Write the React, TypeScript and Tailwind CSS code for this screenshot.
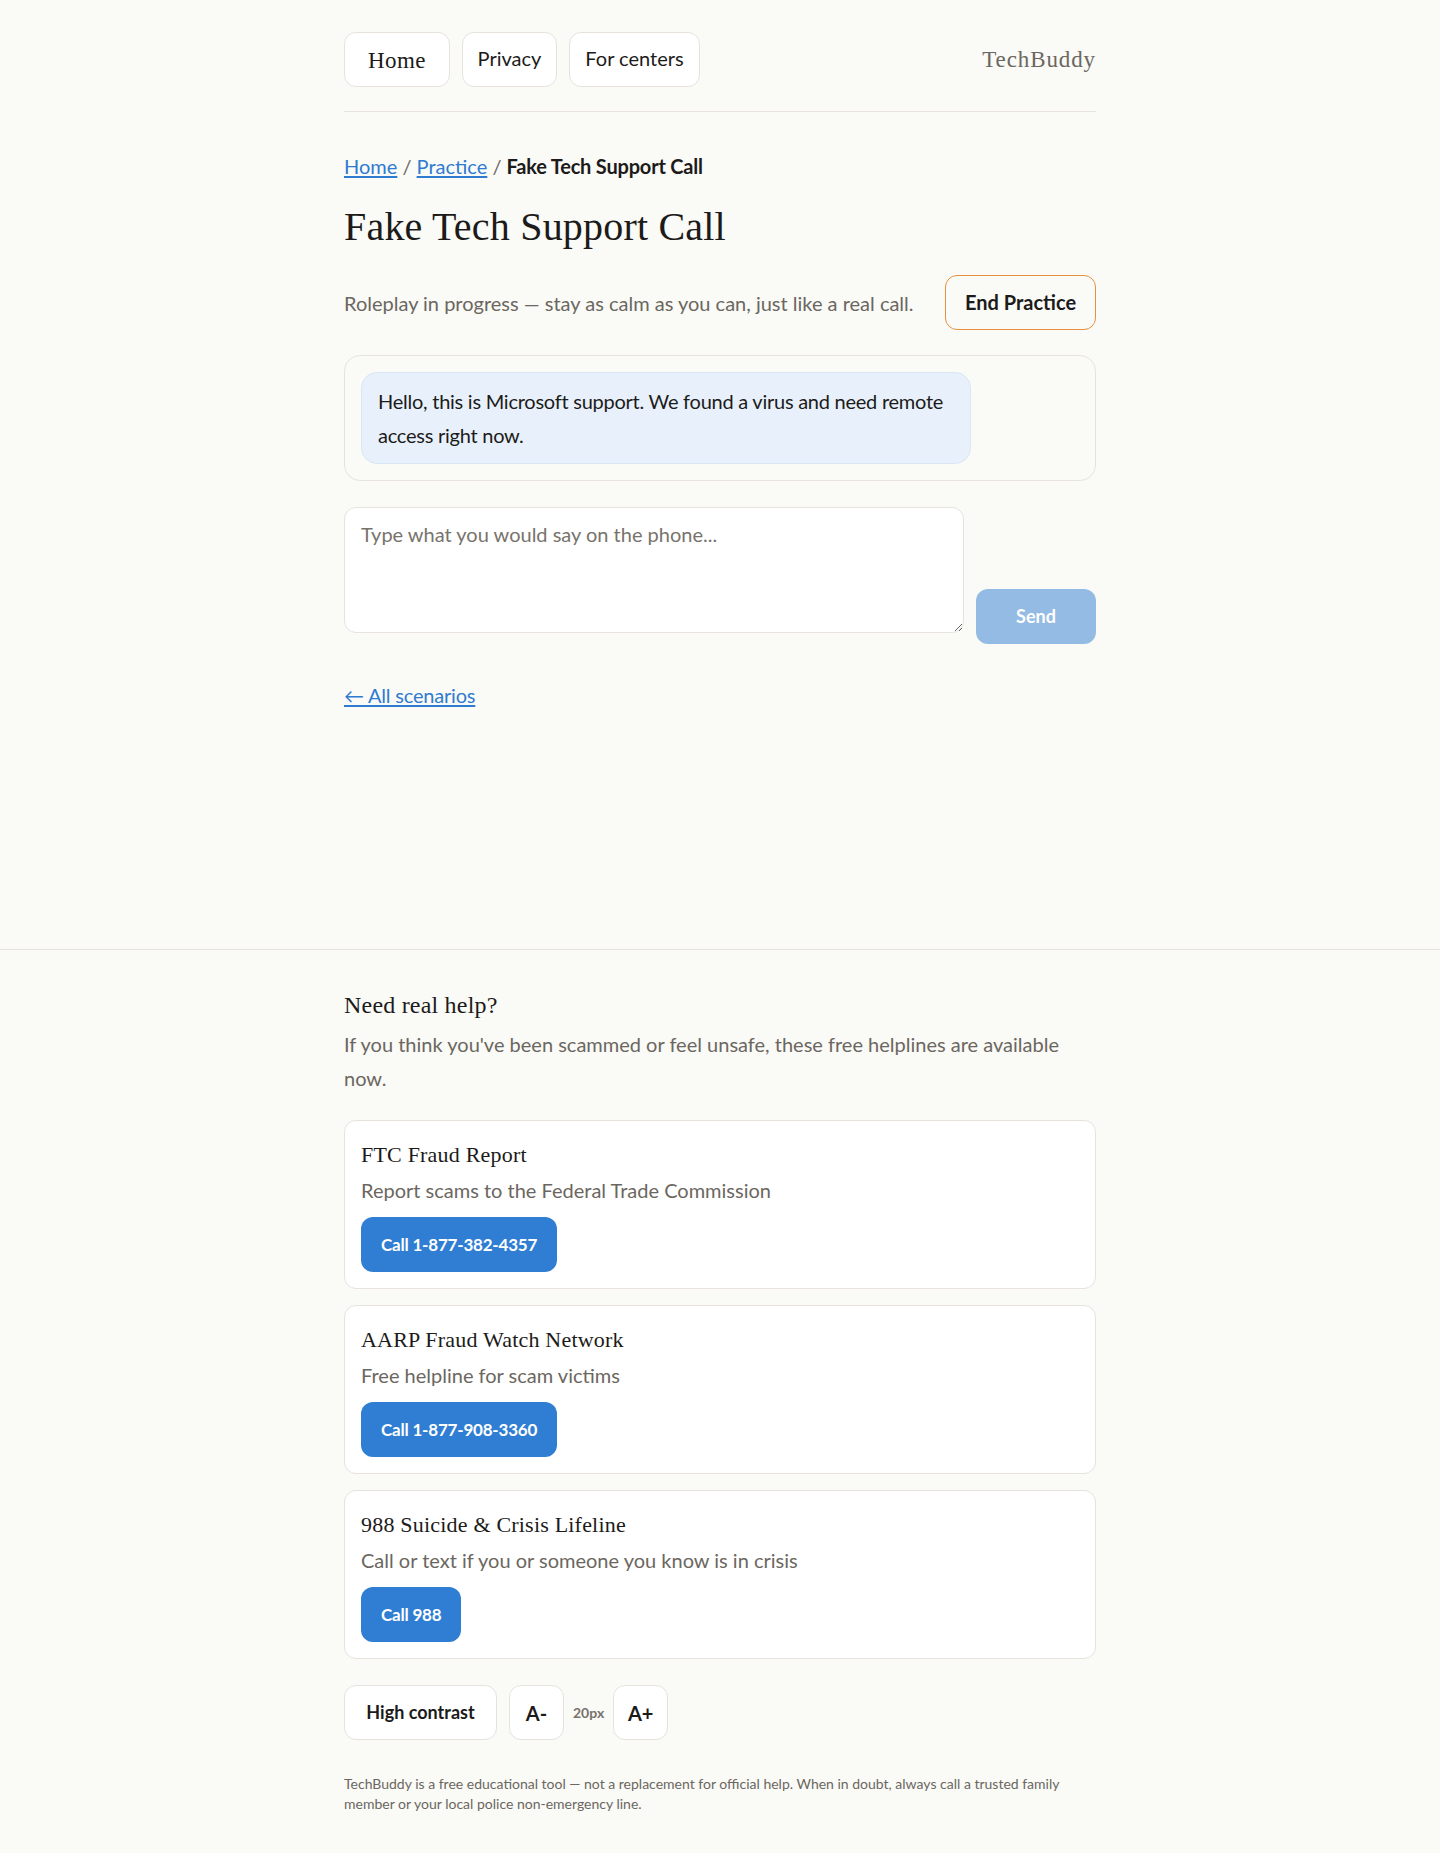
import React from 'react'

// --- Fonts ---

const SANS = { fontFamily: 'Lato, "Noto Sans", sans-serif' }
const SERIF = { fontFamily: '"Liberation Serif", "DejaVu Serif", serif' }

// --- Data ---

const HELPLINES = [
  {
    name: 'FTC Fraud Report',
    desc: 'Report scams to the Federal Trade Commission',
    call: 'Call 1-877-382-4357',
  },
  {
    name: 'AARP Fraud Watch Network',
    desc: 'Free helpline for scam victims',
    call: 'Call 1-877-908-3360',
  },
  {
    name: '988 Suicide & Crisis Lifeline',
    desc: 'Call or text if you or someone you know is in crisis',
    call: 'Call 988',
  },
]

// --- Header ---

function Header() {
  return (
    <header className="flex items-center justify-between border-b border-[#e7e3dc] pt-8 pb-6">
      <nav className="flex items-center gap-3">
        <a
          href="#"
          className="flex h-[55px] w-[106px] items-center justify-center rounded-xl border border-[#e7e3dc] bg-white pt-[3px] text-[23px] tracking-[0.4px] text-[#1c1b19]"
          style={SERIF}
        >
          Home
        </a>
        <a
          href="#"
          className="flex h-[55px] w-[95px] items-center justify-center rounded-xl border border-[#e7e3dc] bg-white pb-[3px] text-[20px] text-[#1c1b19]"
        >
          Privacy
        </a>
        <a
          href="#"
          className="flex h-[55px] w-[131px] items-center justify-center rounded-xl border border-[#e7e3dc] bg-white pb-[3px] text-[20px] text-[#1c1b19]"
        >
          For centers
        </a>
      </nav>
      <span className="pt-[2px] text-[23px] tracking-[0.9px] text-[#6b6760]" style={SERIF}>
        TechBuddy
      </span>
    </header>
  )
}

// --- Roleplay ---

function Roleplay() {
  return (
    <main className="pb-[237px]">
      <nav className="mt-[37px] text-[20px] leading-[34px] text-[#6b6760]">
        <a href="#" className="text-[#2f7bd1] underline underline-offset-2">
          Home
        </a>{' '}
        /{' '}
        <a href="#" className="text-[#2f7bd1] underline underline-offset-2">
          Practice
        </a>{' '}
        / <span className="font-bold tracking-[-0.2px] text-[#1c1b19]">Fake Tech Support Call</span>
      </nav>

      <h1 className="mt-5 text-[40px] leading-[48px] tracking-[0.2px] text-[#1c1b19]" style={SERIF}>
        Fake Tech Support Call
      </h1>

      <div className="mt-6 flex items-center justify-between">
        <p className="text-[20px] text-[#6b6760]">
          Roleplay in progress — stay as calm as you can, just like a real call.
        </p>
        <button className="h-[55px] w-[151px] rounded-xl border border-[#e8903f] bg-transparent pb-[2px] text-[20px] font-bold text-[#1c1b19]">
          End Practice
        </button>
      </div>

      <div className="mt-[25px] rounded-2xl border border-[#e7e3dc] p-4">
        <div className="max-w-[85%] rounded-2xl border border-[#d9e6f3] bg-[#e8f1fb] px-4 py-[11px] text-[20px] leading-[34px] tracking-[-0.25px] text-[#1c1b19]">
          Hello, this is Microsoft support. We found a virus and need remote access right now.
        </div>
      </div>

      <div className="mt-[26px] flex items-end gap-3">
        <textarea
          placeholder="Type what you would say on the phone..."
          className="mb-[11px] block h-[126px] flex-1 rounded-xl border border-[#e7e3dc] bg-white px-4 pt-[9px] text-[20px] leading-[34px] text-[#1c1b19] outline-none placeholder:text-[#77736c]"
        />
        <button className="h-[55px] w-[120px] rounded-xl bg-[#93bbe4] text-[18px] font-bold text-white">
          Send
        </button>
      </div>

      <a
        href="#"
        className="mt-[34px] inline-block text-[20px] leading-[34px] tracking-[-0.2px] text-[#2f7bd1] underline underline-offset-2"
      >
        ← All scenarios
      </a>
    </main>
  )
}

// --- Helplines footer ---

function HelplineCard({ name, desc, call }: (typeof HELPLINES)[number]) {
  return (
    <div className="rounded-xl border border-[#e7e3dc] bg-white p-4">
      <h3 className="text-[22px] leading-[36px] tracking-[0.2px] text-[#1c1b19]" style={SERIF}>
        {name}
      </h3>
      <p className="text-[20px] leading-[34px] text-[#6b6760]">{desc}</p>
      <button className="mt-[10px] h-[55px] rounded-xl bg-[#2f7ed3] px-5 text-[17px] font-bold tracking-[-0.2px] text-white">
        {call}
      </button>
    </div>
  )
}

function Footer() {
  return (
    <footer className="border-t border-[#e7e3dc]">
      <div className="mx-auto w-[752px] pt-[40px] pb-10">
        <h2 className="text-[24px] leading-[31px] tracking-[0.2px] text-[#1c1b19]" style={SERIF}>
          Need real help?
        </h2>
        <p className="mt-[6px] text-[20px] leading-[34px] text-[#6b6760]">
          If you think you've been scammed or feel unsafe, these free helplines are available now.
        </p>

        <div className="mt-[25px] flex flex-col gap-4">
          {HELPLINES.map((h) => (
            <HelplineCard key={h.name} {...h} />
          ))}
        </div>

        <div className="mt-[26px] flex items-center gap-3">
          <button className="h-[55px] w-[153px] rounded-xl border border-[#e7e3dc] bg-white text-[18px] font-bold text-[#1c1b19]">
            High contrast
          </button>
          <button className="h-[55px] w-[55px] rounded-xl border border-[#e7e3dc] bg-white text-[20px] font-bold text-[#1c1b19]">
            A-
          </button>
          <span className="-mx-[3px] text-[14px] font-bold text-[#77736c]">20px</span>
          <button className="h-[55px] w-[55px] rounded-xl border border-[#e7e3dc] bg-white text-[20px] font-bold text-[#1c1b19]">
            A+
          </button>
        </div>

        <p className="mt-[34px] text-[14px] leading-[20px] text-[#6b6760]">
          TechBuddy is a free educational tool — not a replacement for official help. When in doubt,
          always call a trusted family member or your local police non-emergency line.
        </p>
      </div>
    </footer>
  )
}

export default function App() {
  return (
    <div className="min-h-screen bg-[#fafaf7] text-[#1c1b19]" style={SANS}>
      <div className="mx-auto w-[752px]">
        <Header />
        <Roleplay />
      </div>
      <Footer />
    </div>
  )
}
